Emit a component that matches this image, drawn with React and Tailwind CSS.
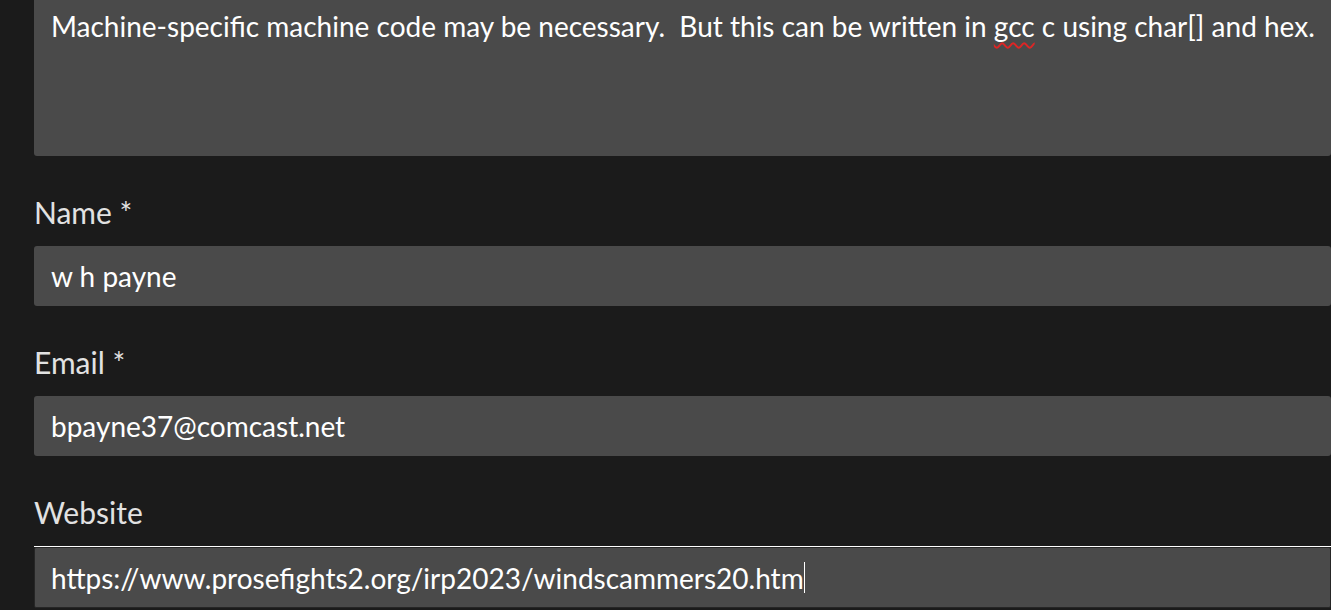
import React from 'react';

const Field = ({ label, value, focused }) => (
  <div>
    <div className="mt-[38px] mb-4 h-9 leading-9 text-[30px] text-[#e2e2e2]">{label}</div>
    {focused ? (
      <div className="h-[62px] border-t border-white">
        <div className="h-[61px] rounded-[2px] border border-[#262626] bg-[#4a4a4a] pl-4 flex items-center text-[28px] text-white">
          <span className="whitespace-pre">{value}</span>
          <span className="h-[31px] w-px bg-white" />
        </div>
      </div>
    ) : (
      <div className="h-[60px] rounded-[3px] bg-[#4a4a4a] pl-[17px] flex items-center text-[28px] text-white">
        <span className="whitespace-pre">{value}</span>
      </div>
    )}
  </div>
);

const App = () => {
  return (
    <div
      className="h-[610px] w-[1331px] overflow-hidden bg-[#1b1b1b] pl-[34px]"
      style={{ fontFamily: 'Lato, "Open Sans", sans-serif' }}
    >
      {/* Comment box */}
      <div className="h-[156px] rounded-b-[3px] bg-[#4a4a4a] pl-[17px] pt-2 text-[28px] leading-9 text-white whitespace-pre">
        Machine-specific machine code may be necessary.  But this can be written in{' '}
        <span className="underline decoration-wavy decoration-[#e02424] decoration-2 underline-offset-[5px]">gcc</span>
        {' '}c using char[] and hex.
      </div>

      <Field label="Name *" value="w h payne" />
      <Field label="Email *" value="bpayne37@comcast.net" />
      <Field label="Website" value="https://www.prosefights2.org/irp2023/windscammers20.htm" focused />
    </div>
  );
};

export default App;
